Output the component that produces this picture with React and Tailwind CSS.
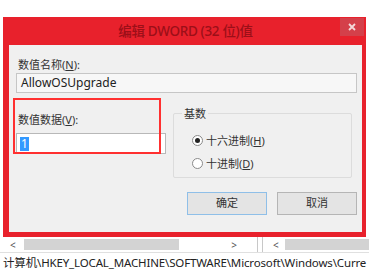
const font = { fontFamily: '"Noto Sans", "Noto Sans CJK SC", sans-serif' };

const Radio = ({ checked, label, hotkey }) => (
  <div className="flex items-center gap-[3px] h-[14px]">
    <span className="w-[11px] h-[11px] rounded-full border border-[#8a8a8a] bg-white flex items-center justify-center">
      {checked && <span className="w-[5px] h-[5px] rounded-full bg-[#222]" />}
    </span>
    <span className="text-[11px] text-[#333] leading-none">
      {label}(<span className="underline">{hotkey}</span>)
    </span>
  </div>
);

const App = () => {
  return (
    <div className="w-[369px] h-[274px] bg-white overflow-hidden" style={font}>
      <div className="h-[17px]" />
      {/* dialog */}
      <div className="ml-[3px] w-[363px] bg-[#e8212c] pl-[6px] pr-[4px] pb-[5px]">
        <div className="h-[28px] relative flex items-center justify-center">
          <span className="text-[13.5px] font-medium text-[#9c0f18] tracking-tight">编辑 DWORD (32 位)值</span>
          <div className="absolute right-[-2px] top-[1px] w-[24px] h-[18px] bg-[#d4404a] flex items-center justify-center">
            <svg width="8" height="8" viewBox="0 0 8 8">
              <path d="M1 1L7 7M7 1L1 7" stroke="#f4d8da" strokeWidth="1.8" />
            </svg>
          </div>
        </div>
        <div className="relative bg-[#f0f0f0] h-[187px] pl-[7px] pr-[5px] pt-[13px]">
          <div className="text-[11px] text-[#333] leading-[14px] pl-[2px]">
            数值名称(<span className="underline">N</span>):
          </div>
          <div className="mt-[1px] h-[20px] border border-[#c6c6c6] bg-[#f7f7f7] flex items-center pl-[4px] text-[12px] text-[#222]">
            AllowOSUpgrade
          </div>
          <div className="flex mt-[20px] gap-[7px]">
            <div className="w-[150px]">
              <div className="text-[11px] text-[#333] leading-[14px] pl-[2px]">
                数值数据(<span className="underline">V</span>):
              </div>
              <div className="mt-[6px] h-[21px] border border-[#b8b8b8] bg-white flex items-center pl-[3px]">
                <span className="bg-[#3399ff] text-white text-[12px] leading-[14px] px-[1px]">1</span>
              </div>
            </div>
            <div className="relative w-[179px] h-[65px] border border-[#dcdcdc] rounded-[2px]">
              <span className="absolute left-[8px] top-[-7px] bg-[#f0f0f0] px-[2px] text-[11px] leading-[14px] text-[#333]">
                基数
              </span>
              <div className="flex flex-col gap-[9px] pl-[18px] pt-[19px]">
                <Radio checked label="十六进制" hotkey="H" />
                <Radio label="十进制" hotkey="D" />
              </div>
            </div>
          </div>
          <div className="flex justify-end gap-[10px] mt-[14px]">
            <button className="w-[80px] h-[23px] border border-[#8fbfe8] bg-[#e4e4e4] text-[11px] text-[#333]">
              确定
            </button>
            <button className="w-[80px] h-[23px] border border-[#b5b5b5] bg-[#e4e4e4] text-[11px] text-[#333]">
              取消
            </button>
          </div>
          {/* annotation */}
          <div className="absolute left-[4px] top-[53px] w-[148px] h-[56px] border-[2px] border-[#ff3030]" />
        </div>
      </div>
      {/* scroll row */}
      <div className="flex h-[16px] border-b border-[#e0e0e0]">
        <div className="w-[258px] flex items-center border-r border-[#c8c8c8] pl-[10px] pr-[20px] text-[#555]">
          <span className="text-[10px] leading-none w-[14px]">&lt;</span>
          <div className="h-[11px] w-[155px] bg-[#d3d3d3]" />
          <div className="flex-1" />
          <span className="text-[10px] leading-none">&gt;</span>
        </div>
        <div className="flex-1 flex items-center pl-[10px] text-[#555] border-l border-[#c8c8c8] ml-[4px]">
          <span className="text-[10px] leading-none w-[12px]">&lt;</span>
          <div className="h-[11px] flex-1 bg-[#d3d3d3]" />
        </div>
      </div>
      <div className="pl-[3px] pt-[2px] text-[11.5px] tracking-[-0.15px] leading-[16px] text-[#222] whitespace-nowrap">
        计算机\HKEY_LOCAL_MACHINE\SOFTWARE\Microsoft\Windows\Curre
      </div>
    </div>
  );
};

export default App;
